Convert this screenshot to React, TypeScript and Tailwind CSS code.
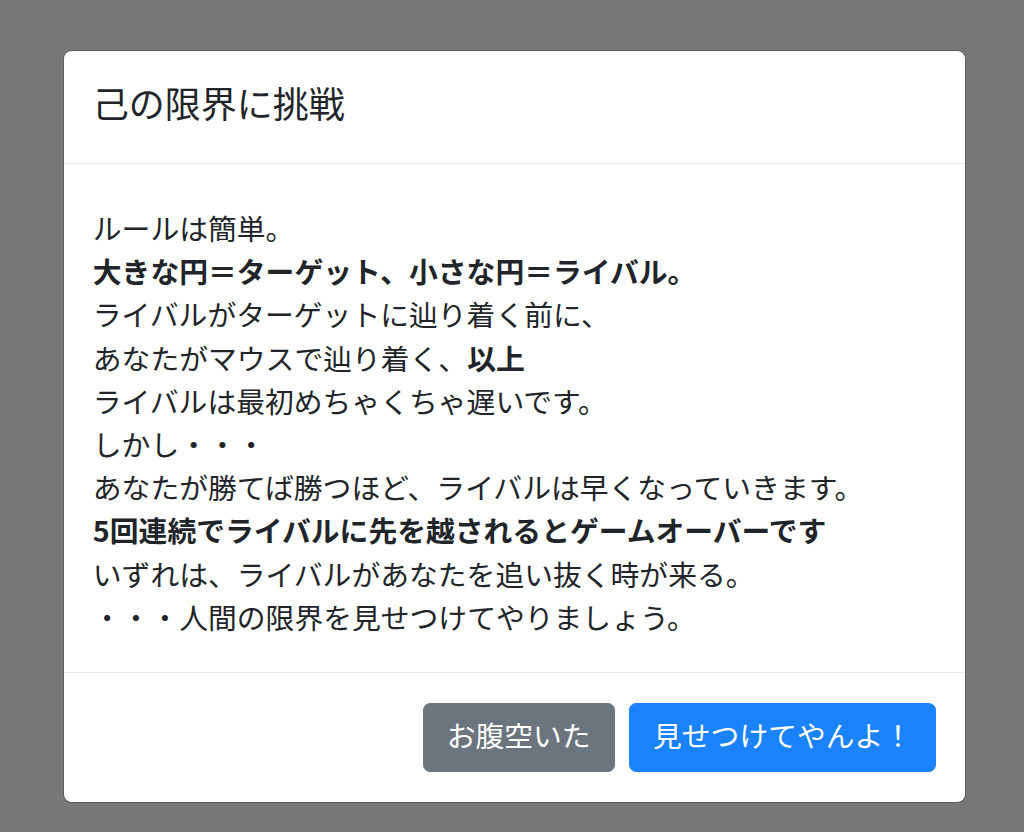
import React from 'react';

const font = { fontFamily: '"Noto Sans CJK JP", "Noto Sans", sans-serif' };

const App: React.FC = () => {
  return (
    <div className="min-h-[832px] bg-[#777777] flex pl-[63px] pt-[50px]" style={font}>
      <div className="w-[903px] h-fit bg-white bg-clip-padding border-[1.8px] border-black/20 rounded-[8.6px] text-[#212529]">
        <div className="px-[28.8px] pt-[24px] pb-[34px] border-b-[1.8px] border-[#e9ecef]">
          <h5 className="text-[36px] leading-[54px] font-normal">己の限界に挑戦</h5>
        </div>

        <div className="px-[28.8px] pt-[42px] pb-[34px] text-[28.8px] leading-[43.2px]">
          <div>ルールは簡単。</div>
          <div className="font-bold">大きな円＝ターゲット、小さな円＝ライバル。</div>
          <div>ライバルがターゲットに辿り着く前に、</div>
          <div>
            あなたがマウスで辿り着く、<span className="font-bold">以上</span>
          </div>
          <div>ライバルは最初めちゃくちゃ遅いです。</div>
          <div>しかし・・・</div>
          <div>あなたが勝てば勝つほど、ライバルは早くなっていきます。</div>
          <div className="font-bold">5回連続でライバルに先を越されるとゲームオーバーです</div>
          <div>いずれは、ライバルがあなたを追い抜く時が来る。</div>
          <div>・・・人間の限界を見せつけてやりましょう。</div>
        </div>

        <div className="flex justify-end gap-[14.4px] px-[28.8px] pt-[29.6px] pb-[30px] border-t-[1.8px] border-[#e9ecef]">
          <button className="px-[23px] pt-[9.6px] pb-[14.4px] text-[28.8px] leading-[43.2px] text-white bg-[#6c757d] border-[1.8px] border-[#6c757d] rounded-[7.2px]">
            お腹空いた
          </button>
          <button className="px-[23px] pt-[9.6px] pb-[14.4px] text-[28.8px] leading-[43.2px] text-white bg-[#1a82fb] border-[1.8px] border-[#1a82fb] rounded-[7.2px]">
            見せつけてやんよ！
          </button>
        </div>
      </div>
    </div>
  );
};

export default App;
